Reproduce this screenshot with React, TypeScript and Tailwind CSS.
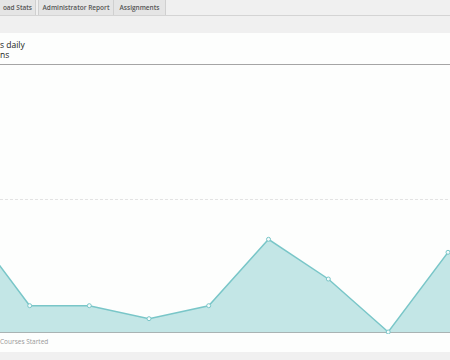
import React from "react";

const pts: [number, number][] = [
  [-30, 226],
  [29.7, 305.7],
  [89.3, 305.7],
  [149, 318.7],
  [208.7, 305.7],
  [268.5, 239.3],
  [328.3, 279],
  [388.2, 332],
  [448, 252.3],
  [508, 226],
];

function Chart() {
  const top = 199;
  const base = 332;
  const line = pts.map((p, i) => `${i ? "L" : "M"}${p[0]} ${p[1] - top}`).join(" ");
  const area = `${line} L508 ${base - top} L-30 ${base - top} Z`;
  return (
    <svg width={450} height={base - top + 2} className="block">
      <line x1={0} x2={450} y1={0.5} y2={0.5} stroke="#e3e3e3" strokeDasharray="3 2" />
      <path d={area} fill="#c3e6e6" />
      <path d={line} fill="none" stroke="#79c6c8" strokeWidth={1.5} />
      <line x1={0} x2={450} y1={base - top + 0.5} y2={base - top + 0.5} stroke="#a9b3b3" />
      {pts.map((p, i) => (
        <circle key={i} cx={p[0]} cy={p[1] - top} r={2} fill="#f4fbfb" stroke="#79c6c8" strokeWidth={1} />
      ))}
    </svg>
  );
}

export default function App() {
  return (
    <div className="w-[450px] h-[360px] overflow-hidden bg-[#f0f0f0] flex flex-col" style={{ fontFamily: '"Open Sans", "Liberation Sans", sans-serif' }}>
      <div className="h-[16px] flex border-b border-[#d4d4d4] shrink-0">
        <div className="h-[15px] w-[36px] bg-[#e5e5e5] border-r border-[#d0d0d0] flex items-center justify-end pr-[3px] text-[6.5px] font-semibold text-[#555]">oad Stats</div>
        <div className="w-[2px]" />
        <div className="h-[15px] w-[76px] bg-[#e5e5e5] border-x border-[#d0d0d0] flex items-center justify-center text-[6.5px] font-semibold text-[#555]">Administrator Report</div>
        <div className="h-[15px] w-[52px] bg-[#e5e5e5] border-r border-[#d0d0d0] flex items-center justify-center text-[6.5px] font-semibold text-[#555]">Assignments</div>
      </div>
      <div className="h-[17px] shrink-0" />
      <div className="bg-[#fdfefd] flex flex-col h-[319px] shrink-0">
        <div className="h-[32px] border-b border-[#a5a5a5] pt-[6px] text-[8.5px] leading-[11px] text-[#222]">
          <div>s daily</div>
          <div className="-mt-[1px]">ns</div>
        </div>
        <div className="h-[134px]" />
        <Chart />
        <div className="text-[6.5px] leading-[9px] text-[#999] pt-[3px]">Courses Started</div>
      </div>
    </div>
  );
}
